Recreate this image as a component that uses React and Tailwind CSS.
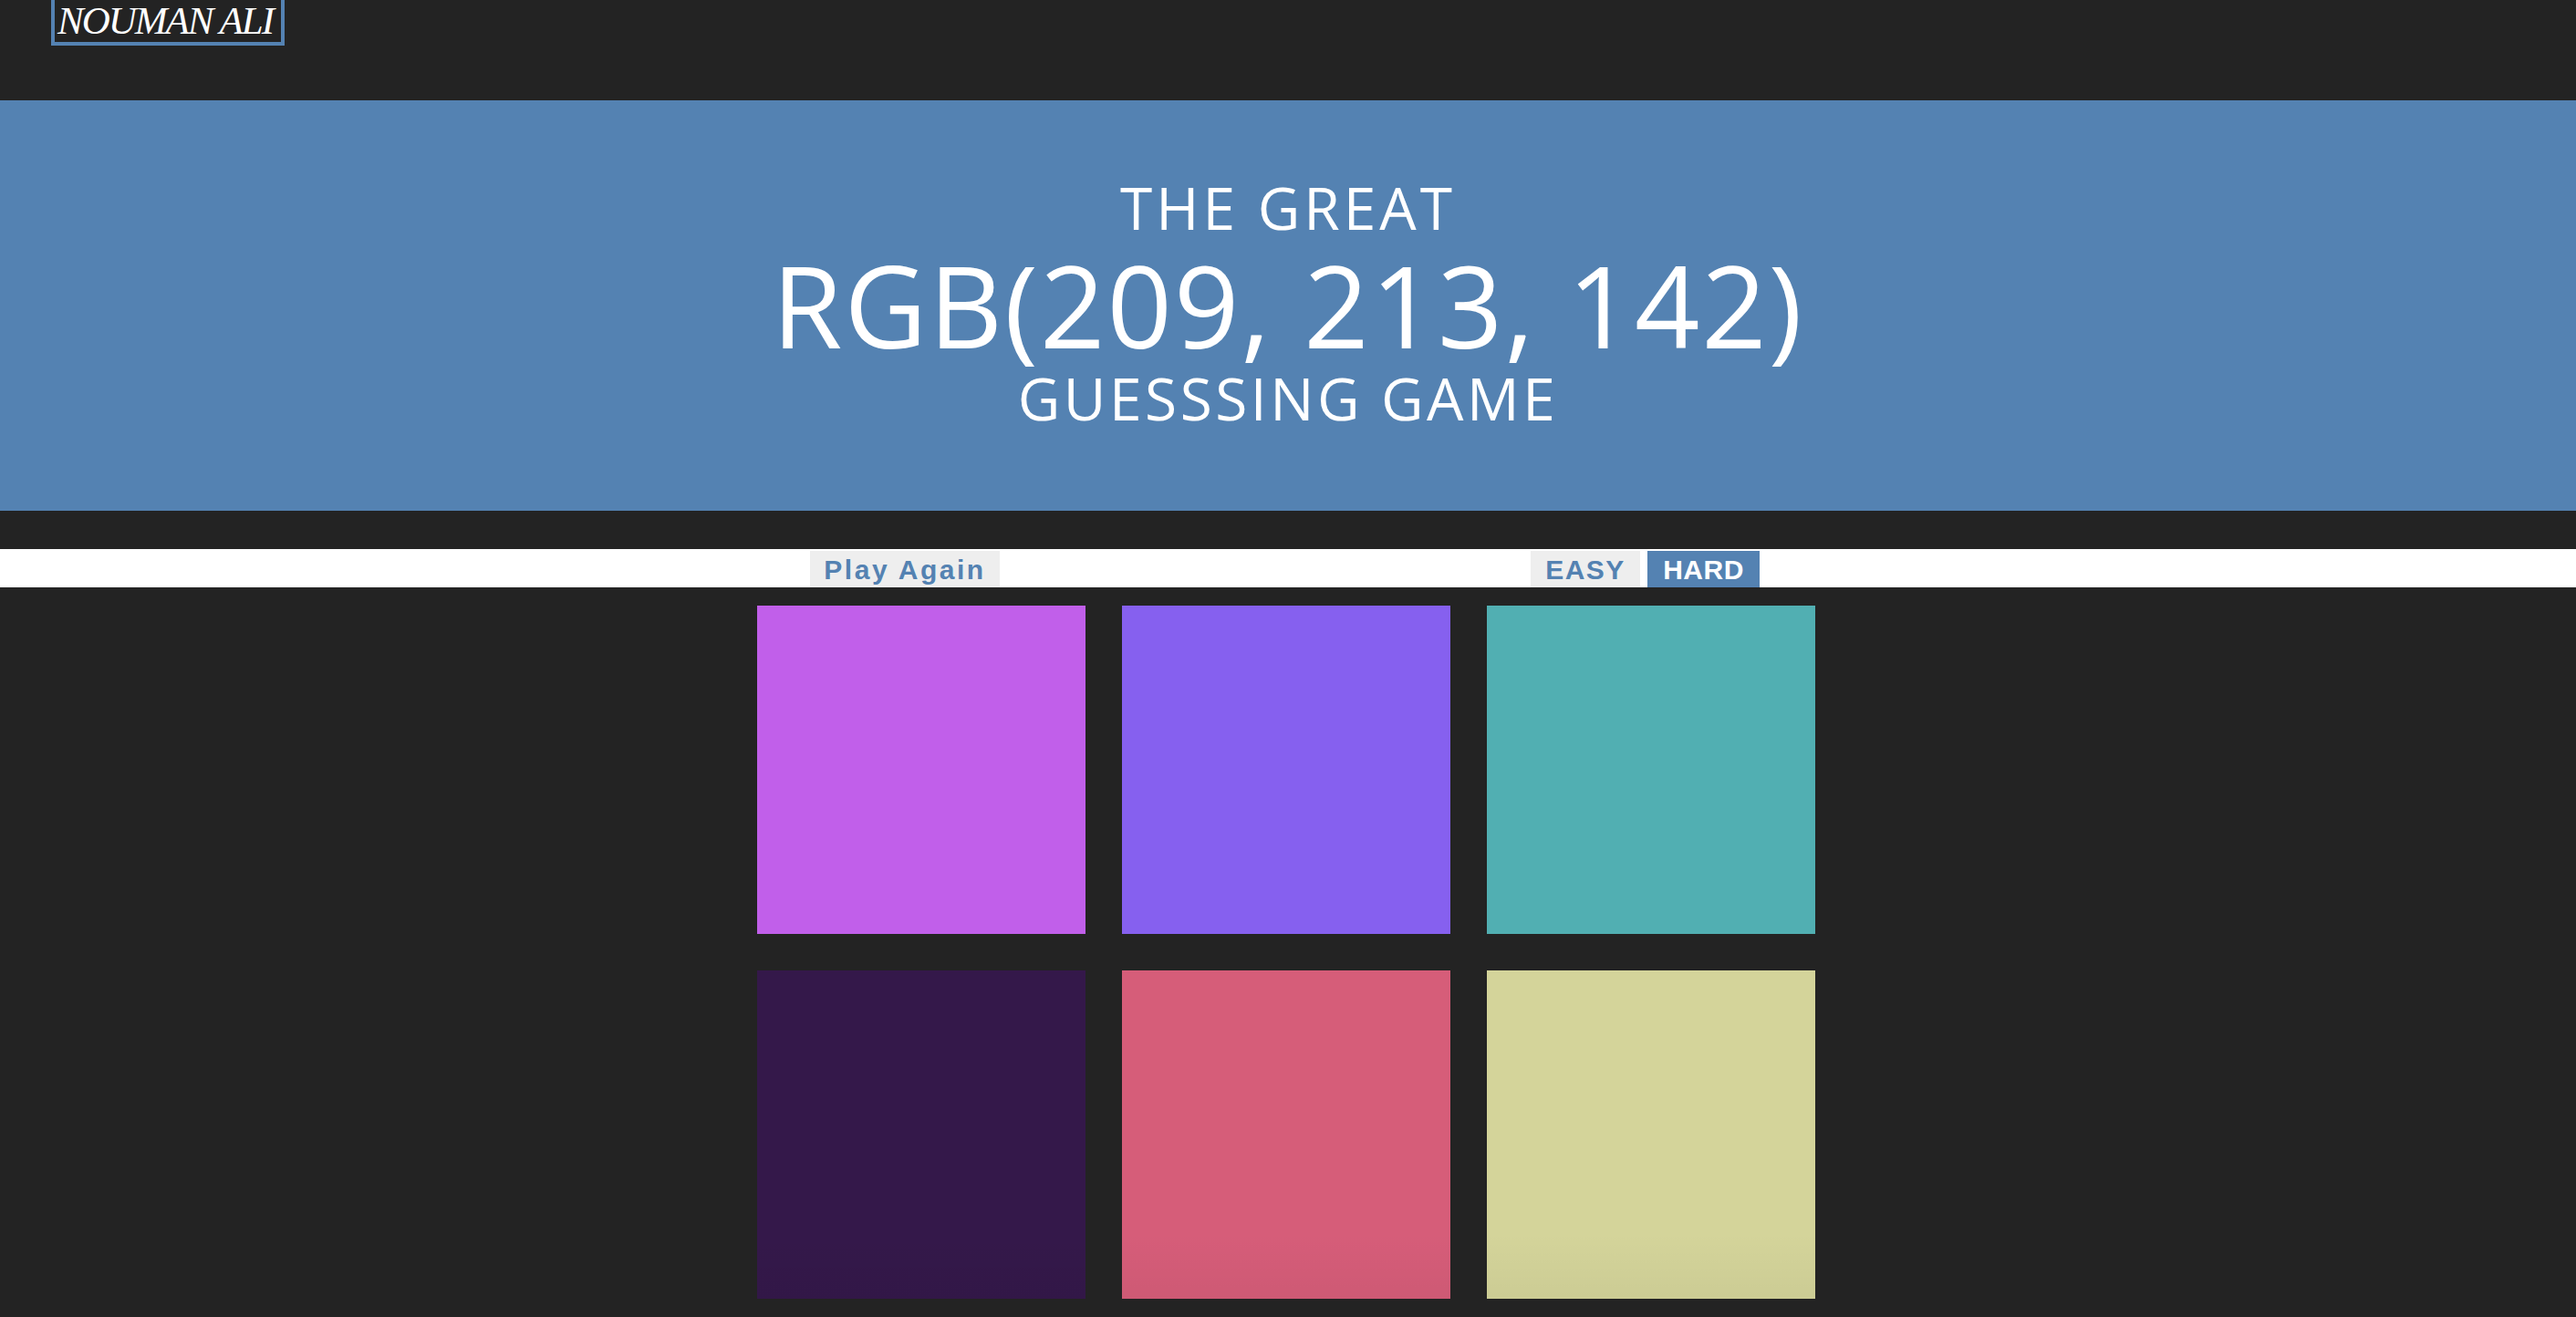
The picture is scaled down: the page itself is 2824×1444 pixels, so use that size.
import React from "react";

const squares = [
  "bg-[#c15fea]",
  "bg-[#8660ef]",
  "bg-[#51afb2]",
  "bg-[#34184a]",
  "bg-[#d65d79]",
  "bg-[#d4d49a]",
];

export default function App() {
  return (
    <div className="min-h-[1444px] w-full bg-[#232323] font-['Open_Sans',sans-serif]">
      {/* top name bar */}
      <div className="h-[110px] pl-[56px]">
        <div className="h-[50px] w-[256px] border-x-4 border-b-4 border-[#5482b2] pl-[3px]">
          <span className="block text-[43px] leading-[46px] italic tracking-[-2px] text-white font-['Liberation_Serif',serif]">
            NOUMAN ALI
          </span>
        </div>
      </div>

      {/* title band */}
      <h1 className="flex h-[450px] flex-col items-center bg-[#5482b2] pt-[83px] font-normal text-white uppercase">
        <span className="block text-[64px] leading-[70px] tracking-[4px]">The Great</span>
        <span className="block text-[125px] leading-[142px] tracking-[2px]">RGB(209, 213, 142)</span>
        <span className="block text-[64px] leading-[64px] tracking-[3.5px]">Guesssing Game</span>
      </h1>

      {/* stripe */}
      <div className="mt-[42px] flex h-[42px] items-end bg-white pl-[888px] font-['Liberation_Sans',Arial,sans-serif] font-bold text-[30px]">
        <button className="flex h-[40px] w-[208px] items-center justify-center bg-[#eeeeee] tracking-[2.5px] text-[#5482b2]">
          Play Again
        </button>
        <div className="w-[582px]" />
        <button className="flex h-[40px] w-[120px] items-center justify-center bg-[#eeeeee] tracking-[1.5px] text-[#5482b2]">
          EASY
        </button>
        <div className="w-[8px]" />
        <button className="flex h-[40px] w-[123px] items-center justify-center bg-[#5482b2] tracking-[0.5px] text-white">
          HARD
        </button>
      </div>

      {/* squares */}
      <div className="ml-[830px] mt-[20px] grid w-[1160px] grid-cols-3 gap-[40px] pb-[20px]">
        {squares.map((c, i) => (
          <div
            key={i}
            className={`h-[360px] w-[360px] ${c} ${
              i >= 3 ? "bg-[linear-gradient(to_bottom,transparent_80%,rgba(0,0,0,0.04))]" : ""
            }`}
          />
        ))}
      </div>
    </div>
  );
}
